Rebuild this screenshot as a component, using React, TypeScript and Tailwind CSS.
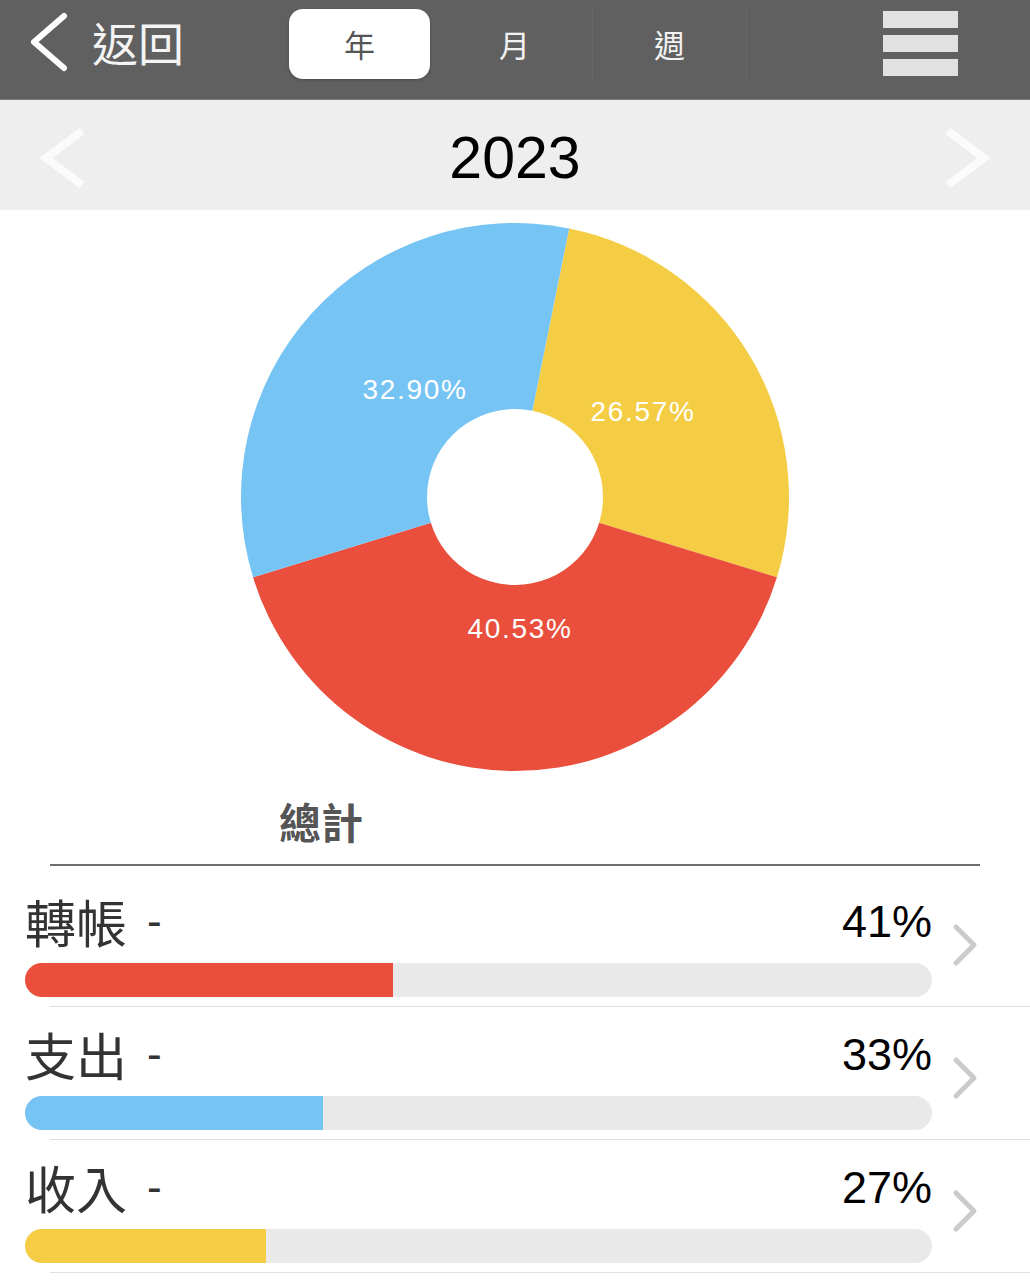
import React from "react";

type Slice = { label: string; value: number; color: string; lx: number; ly: number };

// Clockwise from 12 o'clock, starting where the yellow slice begins.
const START_DEG = 11.4;
const slices: Slice[] = [
  { label: "26.57%", value: 26.57, color: "#f5cd45", lx: 408, ly: 204 },
  { label: "40.53%", value: 40.53, color: "#e94f3c", lx: 285, ly: 421 },
  { label: "32.90%", value: 32.9, color: "#76c4f4", lx: 180, ly: 182 },
];

const rows = [
  { name: "轉帳", pct: "41%", value: 40.53, color: "#e94f3c" },
  { name: "支出", pct: "33%", value: 32.9, color: "#76c4f4" },
  { name: "收入", pct: "27%", value: 26.57, color: "#f5cd45" },
];

function polar(cx: number, cy: number, r: number, deg: number) {
  const a = ((deg - 90) * Math.PI) / 180;
  return [cx + r * Math.cos(a), cy + r * Math.sin(a)];
}

function wedge(cx: number, cy: number, r: number, from: number, to: number) {
  const [x1, y1] = polar(cx, cy, r, from);
  const [x2, y2] = polar(cx, cy, r, to);
  const large = to - from > 180 ? 1 : 0;
  return `M ${cx} ${cy} L ${x1} ${y1} A ${r} ${r} 0 ${large} 1 ${x2} ${y2} Z`;
}

function Donut() {
  const cx = 280;
  const cy = 280;
  let acc = START_DEG;
  const paths = slices.map((s) => {
    const from = acc;
    const to = acc + (s.value / 100) * 360;
    acc = to;
    return <path key={s.label} d={wedge(cx, cy, 274, from, to)} fill={s.color} />;
  });
  return (
    <svg width="560" height="560" viewBox="0 0 560 560" className="block">
      {paths}
      <circle cx={cx} cy={cy} r="88" fill="#ffffff" />
      {slices.map((s) => (
        <text
          key={s.label + "t"}
          x={s.lx}
          y={s.ly}
          textAnchor="middle"
          fill="#ffffff"
          fontSize="28"
          letterSpacing="1.7"
          fontFamily="'Liberation Sans', Arial, sans-serif"
        >
          {s.label}
        </text>
      ))}
    </svg>
  );
}

function Header() {
  return (
    <div className="h-[100px] bg-[#606060] border-b border-[#7c7c7c] flex items-center pb-[12px] box-border">
      <div className="w-[282px] shrink-0 flex items-center pl-[29px]">
        <svg width="40" height="60" viewBox="0 0 40 60" className="block -mt-[4px]">
          <polyline
            points="35,4 5,30 35,56"
            fill="none"
            stroke="#ffffff"
            strokeWidth="6"
            strokeLinecap="round"
            strokeLinejoin="round"
          />
        </svg>
        <span className="ml-[23px] mb-[6px] text-[46px] leading-none text-[#f4f4f4] font-['Noto_Sans_CJK_TC',sans-serif]">
          返回
        </span>
      </div>
      <div className="flex w-[465px] shrink-0 h-[70px]">
        <div className="w-[155px] h-full px-[7px]">
          <div className="h-full bg-white rounded-[14px] shadow-[0_1px_3px_rgba(0,0,0,0.25)] flex items-center justify-center">
            <span className="text-[31px] leading-none text-[#555555] font-['Noto_Sans_CJK_TC',sans-serif]">年</span>
          </div>
        </div>
        <div className="w-[155px] h-full flex items-center justify-center">
          <span className="text-[31px] leading-none text-[#f2f2f2] font-['Noto_Sans_CJK_TC',sans-serif]">月</span>
        </div>
        <div className="w-[155px] h-full flex items-center justify-center border-l border-r border-[#676767]">
          <span className="text-[31px] leading-none text-[#f2f2f2] font-['Noto_Sans_CJK_TC',sans-serif]">週</span>
        </div>
      </div>
      <div className="ml-auto mr-[72px] flex flex-col gap-[7px]">
        <div className="w-[75px] h-[17px] bg-[#e1e1e1]" />
        <div className="w-[75px] h-[17px] bg-[#e1e1e1]" />
        <div className="w-[75px] h-[17px] bg-[#e1e1e1]" />
      </div>
    </div>
  );
}

function YearBar() {
  return (
    <div className="h-[110px] bg-[#eeeeee] flex items-center justify-between px-[38px] pt-[6px] box-border">
      <svg width="50" height="62" viewBox="0 0 50 62" className="block">
        <polyline points="44,4 8,31 44,58" fill="none" stroke="#fbfbfb" strokeWidth="8" />
      </svg>
      <span className="text-[59px] leading-none text-black font-['Liberation_Sans',Arial,sans-serif]">2023</span>
      <svg width="50" height="62" viewBox="0 0 50 62" className="block">
        <polyline points="6,4 42,31 6,58" fill="none" stroke="#fbfbfb" strokeWidth="8" />
      </svg>
    </div>
  );
}

function Row({ name, pct, value, color, first }: { name: string; pct: string; value: number; color: string; first?: boolean }) {
  return (
    <div className={first ? "pt-[25px]" : "pt-[17px]"}>
      <div className="flex items-center pl-[25px] pb-[9px]">
        <div className="w-[907px] shrink-0">
          <div className="h-[60px] flex items-center justify-between">
            <span className="flex items-center text-[#333333]">
              <span className="text-[51px] leading-none font-['Noto_Sans_CJK_TC',sans-serif]">{name}</span>
              <span className="ml-[20px] text-[44px] leading-none font-['Liberation_Sans',Arial,sans-serif]">-</span>
            </span>
            <span className="text-[45px] leading-none text-black font-['Liberation_Sans',Arial,sans-serif]">{pct}</span>
          </div>
          <div className="mt-[12px] h-[34px] rounded-full bg-[#e9e9e9] overflow-hidden">
            <div className="h-full" style={{ width: `${value}%`, backgroundColor: color }} />
          </div>
        </div>
        <svg width="30" height="44" viewBox="0 0 30 44" className="block ml-[18px] mt-[2px]">
          <polyline
            points="6,4 24,22 6,40"
            fill="none"
            stroke="#cbcbcb"
            strokeWidth="5"
            strokeLinecap="round"
            strokeLinejoin="round"
          />
        </svg>
      </div>
      <div className="ml-[50px] h-px bg-[#e0e0e0]" />
    </div>
  );
}

export default function App() {
  return (
    <div className="w-[1030px] h-[1280px] bg-white overflow-hidden font-['Liberation_Sans','Noto_Sans_CJK_TC',sans-serif]">
      <Header />
      <YearBar />
      <div className="flex justify-center mt-[7px]">
        <Donut />
      </div>
      <div className="mt-[20px] pl-[279px]">
        <span className="text-[42px] leading-[48px] font-bold text-[#555555] font-['Noto_Sans_CJK_TC',sans-serif]">總計</span>
      </div>
      <div className="mt-[18px] mx-[50px] h-[2px] bg-[#6e6e6e]" />
      {rows.map((r, i) => (
        <Row key={r.name} {...r} first={i === 0} />
      ))}
    </div>
  );
}
